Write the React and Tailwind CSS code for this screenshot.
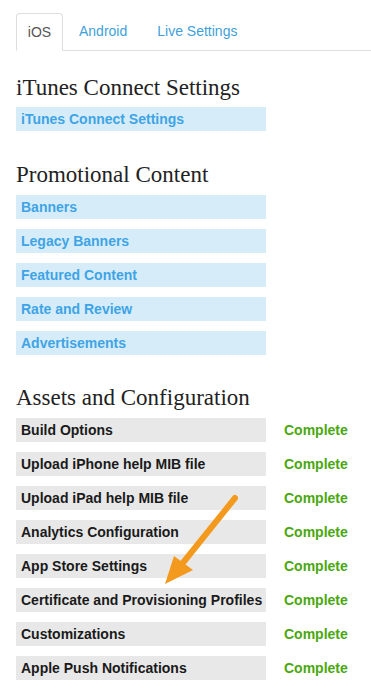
export default function App() {
  const promo = ["Banners", "Legacy Banners", "Featured Content", "Rate and Review", "Advertisements"];
  const assets = [
    "Build Options",
    "Upload iPhone help MIB file",
    "Upload iPad help MIB file",
    "Analytics Configuration",
    "App Store Settings",
    "Certificate and Provisioning Profiles",
    "Customizations",
    "Apple Push Notifications",
  ];
  const sans = { fontFamily: '"Liberation Sans", Arial, sans-serif' };
  const Heading = ({ children, className }) => (
    <h2
      className={`text-[23px] leading-[27px] text-[#222] ${className}`}
      style={{ fontFamily: '"Liberation Serif", Georgia, serif' }}
    >
      {children}
    </h2>
  );
  const BlueBox = ({ children }) => (
    <div className="w-[250px] h-[24px] bg-[#d6edf9] pl-[5px] flex items-center text-[14px] font-bold text-[#3ea4e6]">
      {children}
    </div>
  );
  return (
    <div className="relative w-[371px] h-[700px] bg-white overflow-hidden" style={sans}>
      <div className="pt-[13px] pl-[16px]">
        <div className="flex border-b border-[#ddd] h-[38px] items-end">
          <div className="h-[38px] w-[47px] border border-[#ddd] border-b-white rounded-t-[4px] -mb-px flex items-center justify-center text-[14px] text-[#555] bg-white">
            iOS
          </div>
          <div className="h-[37px] flex items-center ml-[16px] text-[14px] text-[#3f9fd9]">Android</div>
          <div className="h-[37px] flex items-center ml-[30px] text-[14px] text-[#3f9fd9]">Live Settings</div>
        </div>

        <Heading className="mt-[23px]">iTunes Connect Settings</Heading>
        <div className="mt-[6px]">
          <BlueBox>iTunes Connect Settings</BlueBox>
        </div>

        <Heading className="mt-[30px]">Promotional Content</Heading>
        <div className="mt-[7px] flex flex-col gap-[10px]">
          {promo.map((p) => (
            <BlueBox key={p}>{p}</BlueBox>
          ))}
        </div>

        <Heading className="mt-[29px]">Assets and Configuration</Heading>
        <div className="mt-[7px] flex flex-col gap-[10px]">
          {assets.map((a) => (
            <div key={a} className="flex items-center">
              <div className="w-[250px] h-[24px] bg-[#e8e8e8] pl-[5px] flex items-center text-[14px] font-bold text-[#1a1a1a] whitespace-nowrap">
                {a}
              </div>
              <div className="ml-[18px] text-[14px] font-bold text-[#4aa70f]">Complete</div>
            </div>
          ))}
        </div>
      </div>

      <svg className="absolute left-0 top-0 pointer-events-none" width="371" height="700">
        <line x1="235" y1="498" x2="178" y2="569" stroke="#f39a1e" strokeWidth="6" strokeLinecap="round" />
        <polygon points="165,584 174,556 193,570" fill="#f39a1e" />
      </svg>
    </div>
  );
}
